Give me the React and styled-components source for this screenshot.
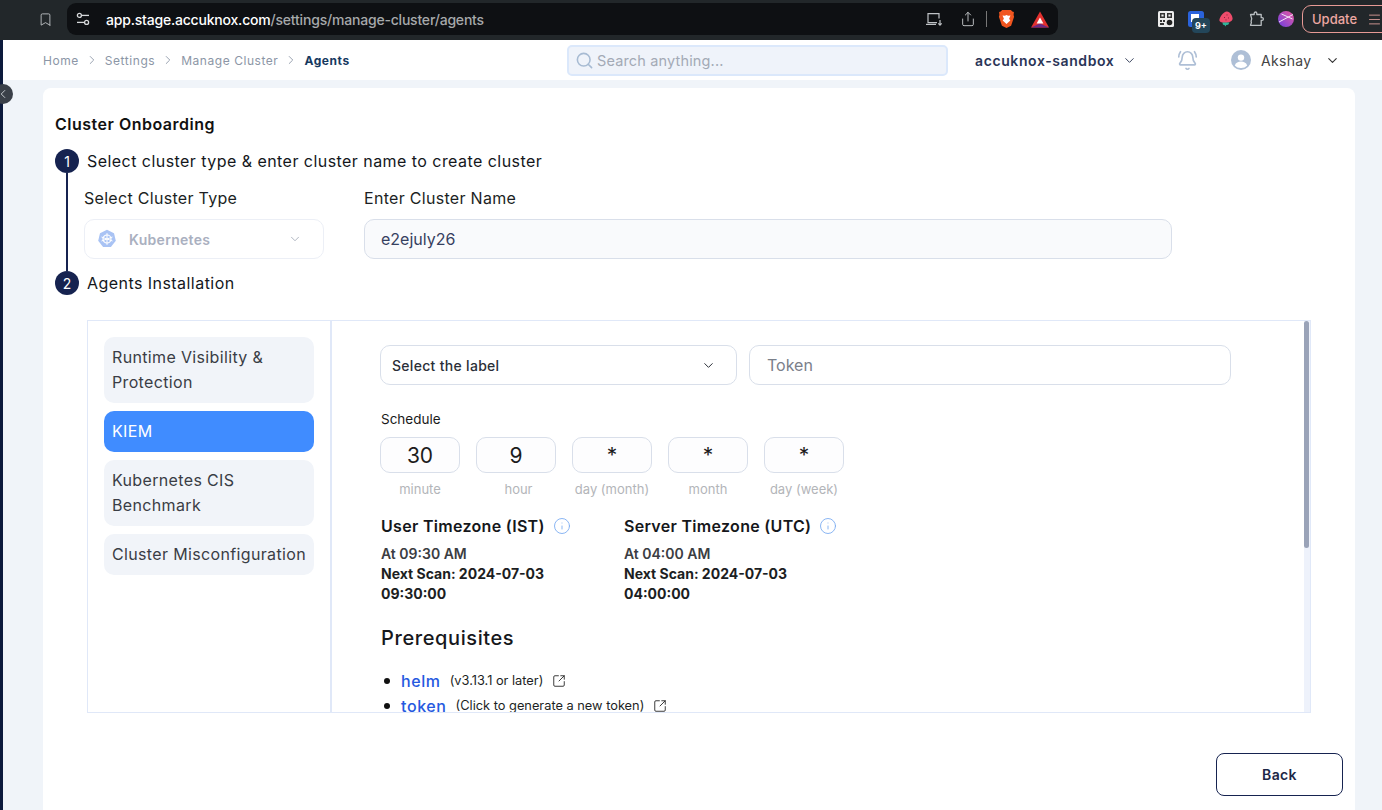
import React from "react";
import styled, { createGlobalStyle } from "styled-components";
import {
  Bookmark,
  ChevronDown,
  ChevronLeft,
  ChevronRight,
  Info,
  Search,
  Share,
  SquareArrowOutUpRight,
  BellRing,
  Menu,
} from "lucide-react";

const Global = createGlobalStyle`
  html, body { margin: 0; padding: 0; height: 810px; overflow: hidden; background: #fff; }
  body { font-family: Inter, "Liberation Sans", sans-serif; color: #111; }
  * { box-sizing: border-box; }
`;

const Page = styled.div`
  position: relative;
  width: 1382px;
  height: 810px;
  overflow: hidden;
  display: flex;
  flex-direction: column;
`;

/* browser chrome */
const Chrome = styled.div`
  height: 40px;
  flex: none;
  background: #22272a;
  display: flex;
  align-items: center;
  padding: 0 0 2px 38px;
  color: #c4c7c9;
`;
const Address = styled.div`
  width: 991px;
  height: 32px;
  margin-left: 14px;
  background: #0e1013;
  border-radius: 9px;
  display: flex;
  align-items: center;
  padding: 0 9px;
  gap: 16px;
  font-size: 14px;
  font-weight: 500;
`;
const Url = styled.span`
  flex: 1;
  color: #a6a9ab;
  letter-spacing: -0.2px;
  span { color: #fff; }
`;
const AddressIcons = styled.div`
  display: flex;
  align-items: center;
`;
const AddressSlot = styled.div`
  display: flex;
  margin-left: ${(p) => p.$gap}px;
`;
const Divider = styled.i`
  width: 1px;
  height: 16px;
  margin-left: 10px;
  background: #777;
`;
const Exts = styled.div`
  flex: 1;
  display: flex;
  align-items: center;
  justify-content: flex-end;
`;
const Ext = styled.div`
  position: relative;
  width: 16px;
  height: 16px;
  margin-left: ${(p) => p.$gap || 14}px;
  display: flex;
`;
const Badge = styled.b`
  position: absolute;
  left: 4px;
  top: 7px;
  width: 18px;
  height: 15px;
  border-radius: 4px;
  background: #23465a;
  color: #fff;
  font-size: 9px;
  font-weight: 700;
  line-height: 15px;
  text-align: center;
`;
const UpdateBtn = styled.div`
  width: 90px;
  height: 28px;
  margin-left: 8px;
  margin-right: -10px;
  border: 1px solid #e79a96;
  border-radius: 9px;
  color: #eda7a2;
  font-size: 13px;
  font-weight: 500;
  display: flex;
  align-items: center;
  gap: 10px;
  padding-left: 9px;
`;

/* app shell */
const Shell = styled.div`
  flex: 1;
  min-height: 0;
  display: flex;
`;
const Rail = styled.div`
  width: 3px;
  flex: none;
  background: #0c1a3c;
`;
const Main = styled.div`
  flex: 1;
  min-width: 0;
  display: flex;
  flex-direction: column;
  background: #f0f4f9;
`;
const Collapse = styled.div`
  position: absolute;
  left: -7px;
  top: 84px;
  width: 20px;
  height: 20px;
  border-radius: 50%;
  background: #3a4049;
  color: #cfd3d8;
  display: flex;
  align-items: center;
  justify-content: center;
`;
const Topbar = styled.div`
  height: 40px;
  flex: none;
  background: #fff;
  display: flex;
  align-items: center;
`;
const Crumbs = styled.div`
  width: 564px;
  flex: none;
  padding-left: 40px;
  display: flex;
  align-items: center;
  font-size: 12px;
  letter-spacing: 0.55px;
  color: #8c96a6;
  svg { margin: 0 6px; color: #8c96a6; }
`;
const CrumbNow = styled.span`
  color: #16395f;
  font-weight: 700;
`;
const SearchBox = styled.div`
  width: 381px;
  height: 31px;
  flex: none;
  border: 2px solid #dbe8fb;
  border-radius: 5px;
  background: #eff3fa;
  display: flex;
  align-items: center;
  gap: 3px;
  padding-left: 6px;
  font-size: 14.5px;
  letter-spacing: 0.15px;
  color: #a3aab6;
  svg { color: #a7bbd3; }
`;
const Tenant = styled.div`
  margin-left: 27px;
  width: 202px;
  flex: none;
  display: flex;
  align-items: center;
  gap: 8px;
  font-size: 14px;
  font-weight: 600;
  color: #2a3557;
  letter-spacing: 0.6px;
  svg { color: #3c4660; }
`;
const BellWrap = styled.div`
  width: 44px;
  flex: none;
  display: flex;
  color: #aebfd6;
`;
const User = styled.div`
  margin-left: 10px;
  display: flex;
  align-items: center;
  font-size: 14px;
  color: #444;
  letter-spacing: 0.3px;
  svg:last-child { margin-left: 14px; color: #333; }
`;
const Avatar = styled.svg`
  width: 20px;
  height: 20px;
  margin-right: 10px;
`;

const Card = styled.div`
  margin: 8px 27px 0 40px;
  flex: 1;
  min-height: 0;
  background: #fff;
  border-radius: 8px 8px 0 0;
  padding: 26px 12px 0;
  display: flex;
  flex-direction: column;
`;
const Title = styled.div`
  font-size: 16px;
  line-height: 20px;
  font-weight: 600;
  color: #111;
  letter-spacing: 0.5px;
`;
const StepRow = styled.div`
  display: flex;
  align-items: center;
  gap: 8px;
  height: 24px;
  margin-top: ${(p) => p.$top || 0}px;
  font-size: 16px;
  color: #14171c;
  letter-spacing: 0.45px;
`;
const StepDot = styled.div`
  width: 24px;
  height: 24px;
  border-radius: 50%;
  background: #162350;
  color: #fff;
  font-size: 14px;
  letter-spacing: 0;
  display: flex;
  align-items: center;
  justify-content: center;
`;
const StepBody = styled.div`
  margin-left: 11px;
  height: 98px;
  border-left: 2px solid #162350;
  padding: 15px 0 0 16px;
  display: flex;
  gap: 40px;
`;
const Field = styled.div`
  width: ${(p) => p.$w}px;
  display: flex;
  flex-direction: column;
`;
const FieldLabel = styled.div`
  height: 21px;
  margin-bottom: 10px;
  font-size: 16px;
  line-height: 21px;
  color: #1c1f24;
  letter-spacing: 0.3px;
`;
const TypeSelect = styled.div`
  height: 40px;
  border: 1px solid #eceff6;
  border-radius: 10px;
  display: flex;
  align-items: center;
  padding: 0 21px 0 12px;
  font-size: 14px;
  font-weight: 600;
  letter-spacing: 0.3px;
  color: #aab0c0;
  svg:last-child { margin-left: auto; color: #a5abb8; }
`;
const KubeIcon = styled.svg`
  width: 20px;
  height: 20px;
  margin-right: 12px;
`;
const NameInput = styled.div`
  height: 40px;
  border: 1px solid #d9dfea;
  border-radius: 10px;
  background: #f9fafc;
  display: flex;
  align-items: center;
  padding-left: 16px;
  font-size: 16px;
  color: #364060;
`;

const Panel = styled.div`
  width: 1224px;
  height: 393px;
  margin: 25px 0 0 32px;
  border: 1px solid #e0e8f8;
  display: flex;
  position: relative;
`;
const TabCol = styled.div`
  width: 244px;
  flex: none;
  border-right: 2px solid #e0e8f8;
  padding: 16px 16px 0;
  display: flex;
  flex-direction: column;
  gap: 8px;
`;
const Tab = styled.div`
  border-radius: 10px;
  background: ${(p) => (p.$active ? "#408cff" : "#f1f4f9")};
  color: ${(p) => (p.$active ? "#fff" : "#3a3d45")};
  padding: 8px;
  font-size: 16px;
  line-height: 25px;
  letter-spacing: 0.35px;
  white-space: nowrap;
`;
const Content = styled.div`
  flex: 1;
  min-width: 0;
  overflow: hidden;
  padding: 24px 0 0 48px;
`;
const Scrollbar = styled.div`
  position: absolute;
  right: 0;
  top: 0;
  width: 6px;
  height: 100%;
  background: #eef2fb;
  &::after {
    content: "";
    display: block;
    width: 5px;
    height: 227px;
    border-radius: 3px;
    background: #9aa3b8;
  }
`;
const FormRow = styled.div`
  display: flex;
  gap: 12px;
`;
const LabelSelect = styled.div`
  width: 357px;
  height: 40px;
  border: 1px solid #d9dfea;
  border-radius: 10px;
  display: flex;
  align-items: center;
  justify-content: space-between;
  padding: 0 20px 0 11px;
  font-size: 14px;
  font-weight: 500;
  letter-spacing: 0.3px;
  color: #2b2f38;
`;
const TokenInput = styled.div`
  width: 482px;
  height: 40px;
  border: 1px solid #d9dfea;
  border-radius: 10px;
  display: flex;
  align-items: center;
  padding-left: 17px;
  font-size: 16px;
  color: #7b808a;
`;
const ScheduleLabel = styled.div`
  margin: 25px 0 0 1px;
  font-size: 13.5px;
  line-height: 18px;
  color: #1a1a1a;
`;
const Cron = styled.div`
  margin-top: 9px;
  display: flex;
  gap: 16px;
`;
const CronCell = styled.div`
  width: 80px;
  display: flex;
  flex-direction: column;
  align-items: center;
`;
const CronBox = styled.div`
  width: 80px;
  height: 36px;
  border: 1px solid #d9dfea;
  border-radius: 10px;
  background: #fdfdfe;
  display: flex;
  align-items: center;
  justify-content: center;
  font-size: 21px;
  color: #1c1c1c;
`;
const CronLabel = styled.div`
  margin-top: 8px;
  padding-left: ${(p) => p.$shift || 0}px;
  font-size: 13px;
  line-height: 16px;
  color: #b3b5b9;
  white-space: nowrap;
`;
const Zones = styled.div`
  margin: 17px 0 0 1px;
  display: flex;
  gap: 25px;
`;
const Zone = styled.div`
  width: 218px;
`;
const ZoneTitle = styled.div`
  display: flex;
  align-items: center;
  gap: 8px;
  height: 24px;
  font-size: 16px;
  font-weight: 600;
  color: #15171b;
  letter-spacing: 0.3px;
  white-space: nowrap;
  svg { color: #7eaef2; }
`;
const ZoneLines = styled.div`
  margin-top: 6px;
  font-size: 14px;
  line-height: 20px;
  font-weight: 700;
  color: #1c1e22;
  width: 180px;
`;
const ZoneAt = styled.div`
  font-weight: 600;
  color: #3b3d42;
`;
const PrereqTitle = styled.div`
  margin: 20px 0 0 1px;
  font-size: 20px;
  line-height: 28px;
  font-weight: 500;
  color: #16181c;
  letter-spacing: 0.6px;
`;
const PrereqList = styled.ul`
  margin: 16px 0 0;
  padding: 0;
  list-style: none;
`;
const PrereqItem = styled.li`
  height: 25px;
  display: flex;
  align-items: center;
  font-size: 12.8px;
  color: #1d1f24;
  &::before {
    content: "";
    width: 6px;
    height: 6px;
    border-radius: 50%;
    background: #111;
    margin: 0 11px 0 4px;
  }
  svg { margin-left: 9px; color: #222; }
`;
const PrereqLink = styled.span`
  font-size: 16px;
  font-weight: 500;
  color: #2559e0;
  margin-right: 9px;
  letter-spacing: 0.6px;
`;

const Footer = styled.div`
  flex: 1;
  display: flex;
  justify-content: flex-end;
  align-items: flex-start;
  padding-top: 40px;
`;
const BackButton = styled.button`
  width: 127px;
  height: 43px;
  background: #fff;
  border: 1px solid #162350;
  border-radius: 8px;
  font: 600 14px Inter, sans-serif;
  color: #1d2747;
  letter-spacing: 0.4px;
`;

const Crumb = ({ children }) => (
  <>
    {children}
    <ChevronRight size={14} strokeWidth={1.5} />
  </>
);

const Kube = () => (
  <KubeIcon viewBox="0 0 20 20">
    <path d="M10 .8l7 3.4 1.800 7.600-4.900 6.200H6.100L1.200 11.800 3 4.200z" fill="#a9c3f4" />
    <circle cx="10" cy="10" r="4" fill="none" stroke="#fff" strokeWidth="1.2" />
    <path d="M10 4.200v11.600M4.500 8l11 4M15.500 8l-11 4" stroke="#fff" strokeWidth="1" />
  </KubeIcon>
);

const BraveIcon = () => (
  <svg width="17" height="18" viewBox="0 0 16 18">
    <path d="M3.600 0h8.800l1.400 1.600 1.600.3-.3 3.200.5 1.600-3 9-4.600 2.300-4.600-2.300-3-9 .5-1.600-.3-3.200 1.600-.3z" fill="#f1561f" />
    <path d="M4 5.400l2.400.3L8 5l1.600.7 2.400-.3-1.400 3.400 1.200 1.800L8 14l-3.800-3.400 1.200-1.800z" fill="#fff" />
  </svg>
);

const AuroraIcon = () => (
  <svg width="18" height="17" viewBox="0 0 18 16">
    <path d="M9 0l9 16H0z" fill="#e2302e" />
    <path d="M9 12l9 4H0z" fill="#6a2a86" />
    <path d="M9 6l3.400 6H5.600z" fill="#fff" />
  </svg>
);

const InstallIcon = () => (
  <svg width="18" height="14" viewBox="0 0 18 14" fill="none" stroke="#bfc2c5" strokeWidth="1.2">
    <path d="M12 10.600H3V1.600h11v5" />
    <path d="M1 12.400h10" />
    <path d="M15 8v5M13.300 11.400l1.700 1.700 1.700-1.700" />
  </svg>
);

const TuneIcon = () => (
  <svg width="14" height="14" viewBox="0 0 14 14" fill="none" stroke="#d6d8da" strokeWidth="1.3">
    <circle cx="3.400" cy="3.400" r="2" />
    <path d="M6 3.400h7" />
    <circle cx="10.600" cy="10.400" r="2" />
    <path d="M1 10.400h7" />
  </svg>
);

const QrIcon = () => (
  <svg width="16" height="16" viewBox="0 0 16 16">
    <rect width="16" height="16" rx="1.500" fill="#ececec" />
    <path d="M2 2h5v5H2zM3.400 3.400v2.200h2.200V3.400zM9 2h5v5H9zM10.400 3.400v2.200h2.200V3.400zM2 9h2v2H2zM5 9h2v2H5zM2 12h4v2H2z" fill="#333" fillRule="evenodd" />
    <circle cx="11.500" cy="11.500" r="2.800" fill="#222" />
  </svg>
);

const BlueExt = () => (
  <svg width="16" height="16" viewBox="0 0 16 16">
    <rect width="16" height="16" rx="2.500" fill="#2a63dc" />
    <rect x="3" y="3" width="8" height="8" fill="#fff" />
  </svg>
);

const BerryIcon = () => (
  <svg width="14" height="16" viewBox="0 0 14 16">
    <path d="M8 .6c3 .4 5.400 3.600 5.600 7 .1 2.400-2.400 3.800-6 4.100-3 .2-7-.3-7.200-2.300C.2 6.500 5 .2 8 .6z" fill="#ee4c6b" />
    <path d="M3.400 11.400h7l-1.200 2.400-2 .2-.6 1.400-1.200-1.400-1.400-.2z" fill="#2fb59a" />
    <path d="M8 3.500v.9M5.500 6v.9M9.500 6.500v.9M7 8.500v.9" stroke="#7a1c33" strokeWidth="1" />
  </svg>
);

const PuzzleIcon = () => (
  <svg width="16" height="16" viewBox="0 0 16 16" fill="none" stroke="#b9bec1" strokeWidth="1.300" strokeLinejoin="round">
    <path d="M1.500 3.500h3.700V2.300a1.300 1.300 0 0 1 2.600 0v1.200h4.400v3.200h.9a1.300 1.300 0 0 1 0 2.600h-.9v5H1.500l.9-2.700-.3-1.300.6-2.700z" />
  </svg>
);

const OrbIcon = () => (
  <svg width="16" height="16" viewBox="0 0 16 16">
    <defs>
      <linearGradient id="orb" x1="0" y1="1" x2="1" y2="0">
        <stop offset="0" stopColor="#6d3fe0" />
        <stop offset="1" stopColor="#ea5aa0" />
      </linearGradient>
    </defs>
    <circle cx="8" cy="8" r="8" fill="url(#orb)" />
    <path d="M1 11L15 3.500M3.500 3l11 5" stroke="#f3e4f5" strokeWidth="1" />
  </svg>
);

const crons = [
  ["30", "minute", 0],
  ["9", "hour", 5],
  ["*", "day (month)", 0],
  ["*", "month", 0],
  ["*", "day (week)", 0],
];

const zones = [
  ["User Timezone (IST)", "At 09:30 AM", "Next Scan: 2024-07-03 09:30:00"],
  ["Server Timezone (UTC)", "At 04:00 AM", "Next Scan: 2024-07-03 04:00:00"],
];

export default function App() {
  return (
    <Page>
      <Global />
      <Chrome>
        <Bookmark size={15} strokeWidth={1.4} />
        <Address>
          <TuneIcon />
          <Url>
            <span>app.stage.accuknox.com</span>/settings/manage-cluster/agents
          </Url>
          <AddressIcons>
            <InstallIcon />
            <AddressSlot $gap={17}>
              <Share size={16} strokeWidth={1.4} />
            </AddressSlot>
            <Divider />
            <AddressSlot $gap={11}>
              <BraveIcon />
            </AddressSlot>
            <AddressSlot $gap={16}>
              <AuroraIcon />
            </AddressSlot>
          </AddressIcons>
        </Address>
        <Exts>
          <QrIcon />
          <Ext $gap={14}>
            <BlueExt />
            <Badge>9+</Badge>
          </Ext>
          <Ext $gap={15}>
            <BerryIcon />
          </Ext>
          <Ext $gap={14}>
            <PuzzleIcon />
          </Ext>
          <Ext $gap={13}>
            <OrbIcon />
          </Ext>
          <UpdateBtn>
            Update
            <Menu size={15} strokeWidth={1.3} />
          </UpdateBtn>
        </Exts>
      </Chrome>
      <Shell>
        <Rail />
        <Main>
          <Topbar>
            <Crumbs>
              <Crumb>Home</Crumb>
              <Crumb>Settings</Crumb>
              <Crumb>Manage Cluster</Crumb>
              <CrumbNow>Agents</CrumbNow>
            </Crumbs>
            <SearchBox>
              <Search size={19} strokeWidth={2} />
              Search anything...
            </SearchBox>
            <Tenant>
              accuknox-sandbox
              <ChevronDown size={15} strokeWidth={1.6} />
            </Tenant>
            <BellWrap>
              <BellRing size={21} strokeWidth={1.9} />
            </BellWrap>
            <User>
              <Avatar viewBox="0 0 20 20">
                <circle cx="10" cy="10" r="10" fill="#aebfd6" />
                <circle cx="10" cy="7.600" r="3.200" fill="#fff" />
                <path d="M3.800 15.400c1-2.800 3.400-3.900 6.200-3.900s5.200 1.100 6.200 3.900A8 8 0 0 1 10 18a8 8 0 0 1-6.200-2.600z" fill="#fff" />
              </Avatar>
              Akshay
              <ChevronDown size={15} strokeWidth={1.8} />
            </User>
          </Topbar>
          <Card>
            <Title>Cluster Onboarding</Title>
            <StepRow $top={15}>
              <StepDot>1</StepDot>
              Select cluster type &amp; enter cluster name to create cluster
            </StepRow>
            <StepBody>
              <Field $w={240}>
                <FieldLabel>Select Cluster Type</FieldLabel>
                <TypeSelect>
                  <Kube />
                  Kubernetes
                  <ChevronDown size={14} strokeWidth={1.5} />
                </TypeSelect>
              </Field>
              <Field $w={808}>
                <FieldLabel>Enter Cluster Name</FieldLabel>
                <NameInput>e2ejuly26</NameInput>
              </Field>
            </StepBody>
            <StepRow>
              <StepDot>2</StepDot>
              Agents Installation
            </StepRow>
            <Panel>
              <TabCol>
                <Tab>
                  Runtime Visibility &amp;
                  <br />
                  Protection
                </Tab>
                <Tab $active>KIEM</Tab>
                <Tab>
                  Kubernetes CIS
                  <br />
                  Benchmark
                </Tab>
                <Tab>Cluster Misconfiguration</Tab>
              </TabCol>
              <Content>
                <FormRow>
                  <LabelSelect>
                    Select the label
                    <ChevronDown size={15} strokeWidth={1.6} />
                  </LabelSelect>
                  <TokenInput>Token</TokenInput>
                </FormRow>
                <ScheduleLabel>Schedule</ScheduleLabel>
                <Cron>
                  {crons.map(([value, label, shift]) => (
                    <CronCell key={label}>
                      <CronBox>{value}</CronBox>
                      <CronLabel $shift={shift}>{label}</CronLabel>
                    </CronCell>
                  ))}
                </Cron>
                <Zones>
                  {zones.map(([title, at, next]) => (
                    <Zone key={title}>
                      <ZoneTitle>
                        {title}
                        <Info size={18} strokeWidth={1.2} />
                      </ZoneTitle>
                      <ZoneLines>
                        <ZoneAt>{at}</ZoneAt>
                        {next}
                      </ZoneLines>
                    </Zone>
                  ))}
                </Zones>
                <PrereqTitle>Prerequisites</PrereqTitle>
                <PrereqList>
                  <PrereqItem>
                    <PrereqLink>helm</PrereqLink>
                    (v3.13.1 or later)
                    <SquareArrowOutUpRight size={14} strokeWidth={1.5} />
                  </PrereqItem>
                  <PrereqItem>
                    <PrereqLink>token</PrereqLink>
                    (Click to generate a new token)
                    <SquareArrowOutUpRight size={14} strokeWidth={1.5} />
                  </PrereqItem>
                </PrereqList>
              </Content>
              <Scrollbar />
            </Panel>
            <Footer>
              <BackButton>Back</BackButton>
            </Footer>
          </Card>
        </Main>
      </Shell>
      <Collapse>
        <ChevronLeft size={14} strokeWidth={1.6} />
      </Collapse>
    </Page>
  );
}
